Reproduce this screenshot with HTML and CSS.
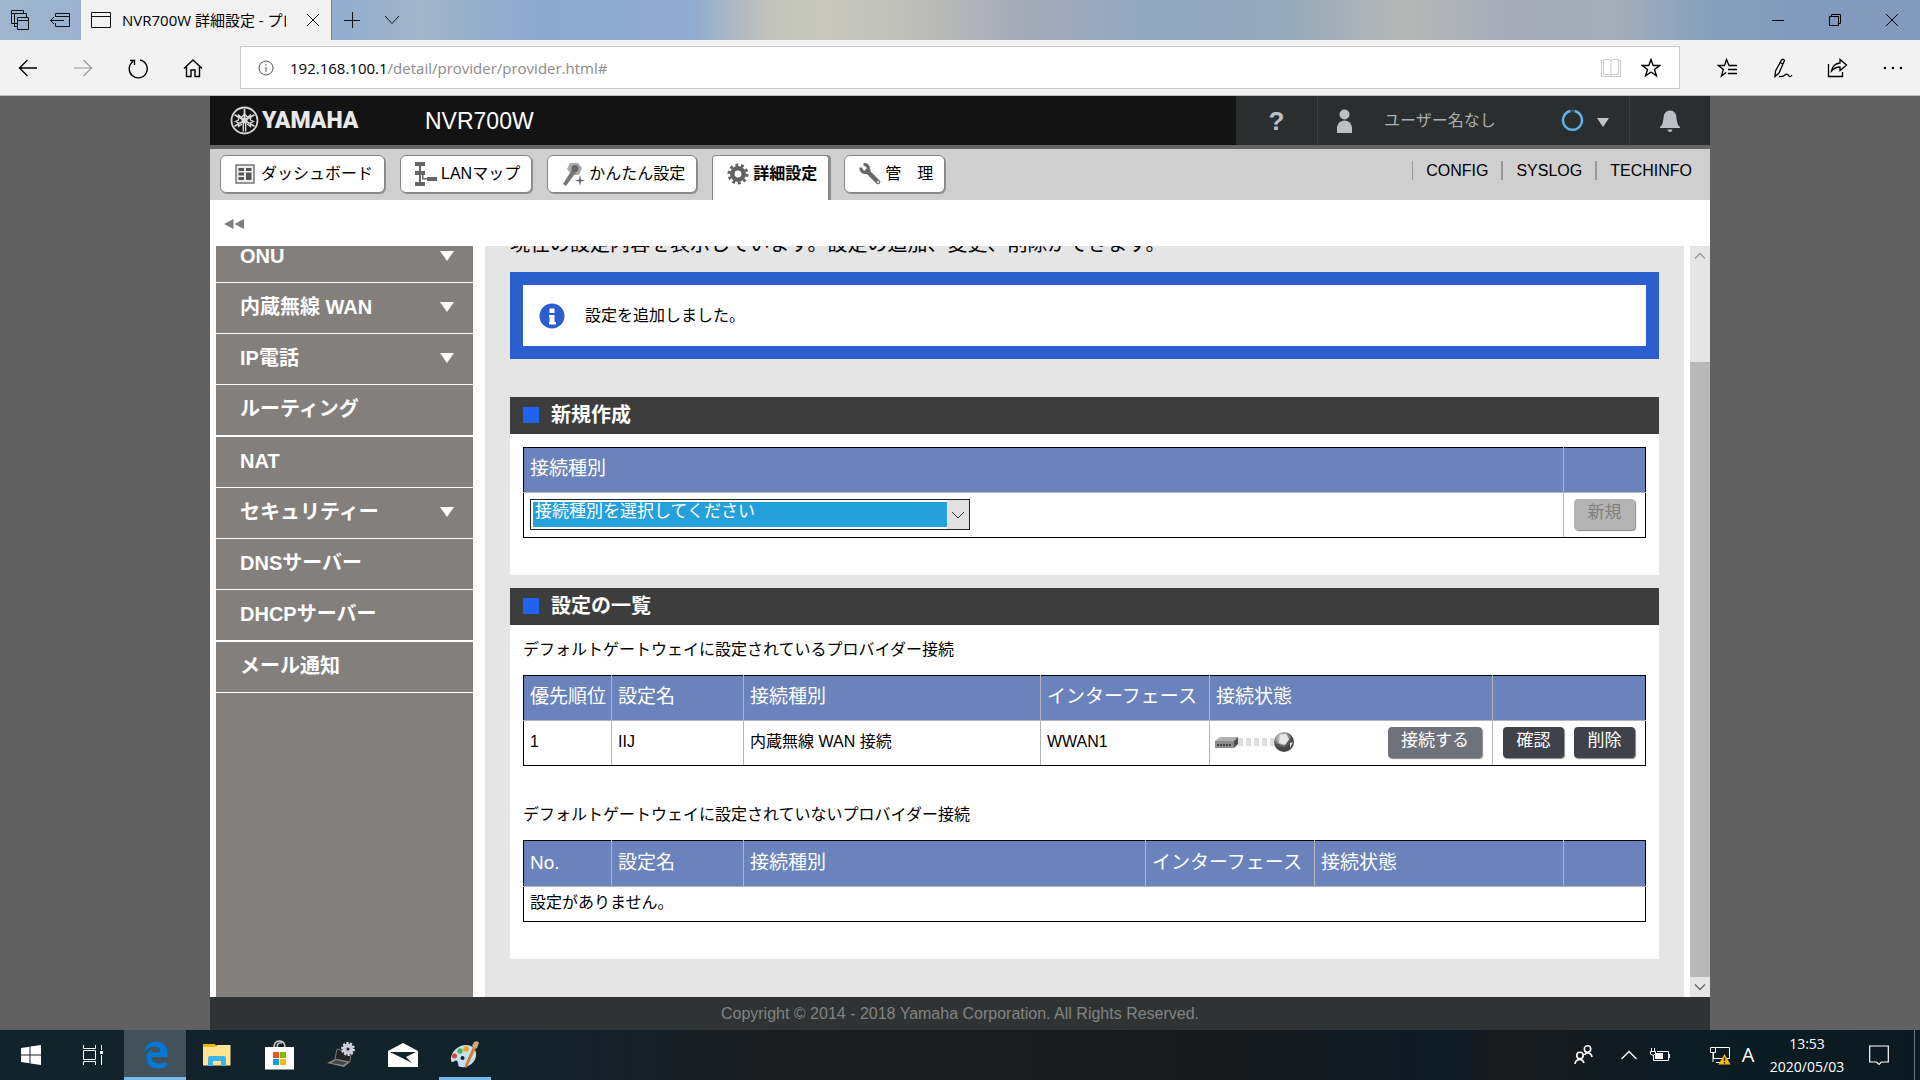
FILE: index.html
```html
<!DOCTYPE html>
<html lang="ja">
<head>
<meta charset="utf-8">
<title>NVR700W 詳細設定 - プロバイダー接続</title>
<link rel="stylesheet" href="styles.css">
</head>
<body>
<div class="titlebar">
  <button class="tb-btn" aria-label="タブ一覧"><svg width="20" height="22" viewBox="0 0 20 22" fill="none" stroke="#111"><path d="M7 14.500H1.500V1.500H13.500V4.500M1.500 4.500H4.500M16.500 8V4.500H4.500V17.500H7"/><path d="M7.500 8.500H18.500V20.500H7.500ZM7.500 11.500H18.500"/></svg></button>
  <button class="tb-btn" aria-label="タブを保存して閉じる"><svg width="22" height="16" viewBox="0 0 22 16" fill="none" stroke="#111"><path d="M6.500 5V1.500H20.500V14.500H6.500V11M6.500 4.500H20.500M1.500 8.500H15M5 5L1.500 8.500L5 12"/></svg></button>
  <div class="btab">
    <svg width="22" height="18" viewBox="0 0 22 18" fill="none" stroke="#111"><path d="M1.500 1.500H20.500V16.500H1.500ZM1.500 5.500H20.500"/></svg>
    <span class="btab-title">NVR700W 詳細設定 - プロバイダー接続</span>
    <button class="btab-close" aria-label="タブを閉じる"><svg width="14" height="14" viewBox="0 0 14 14" stroke="#111"><path d="M1 1L13 13M13 1L1 13"/></svg></button>
  </div>
  <button class="tb-btn" aria-label="新しいタブ"><svg width="18" height="18" viewBox="0 0 18 18" stroke="#111"><path d="M1 9.500H17M9.500 1V17"/></svg></button>
  <button class="tb-btn" aria-label="タブのプレビュー"><svg width="18" height="10" viewBox="0 0 18 10" fill="none" stroke="#111"><path d="M2 1L9 8.500L16 1"/></svg></button>
  <div class="win-btns">
    <button aria-label="最小化"><svg width="12" height="12" viewBox="0 0 12 12" stroke="#000"><path d="M0 6.500H12"/></svg></button>
    <button aria-label="元に戻す"><svg width="12" height="12" viewBox="0 0 12 12" fill="none" stroke="#000"><path d="M.5 2.500H9.500V11.500H.5ZM2.500 2.500V.5H11.500V9.500H9.500"/></svg></button>
    <button aria-label="閉じる"><svg width="14" height="14" viewBox="0 0 14 14" stroke="#000"><path d="M1 1L13 13M13 1L1 13"/></svg></button>
  </div>
</div>
<div class="toolbar">
  <button class="tool" aria-label="戻る"><svg width="20" height="18" viewBox="0 0 20 18" fill="none" stroke="#000" stroke-width="1.300"><path d="M19 9H1.500M9.500 1L1.500 9L9.500 17"/></svg></button>
  <button class="tool" aria-label="進む"><svg width="20" height="18" viewBox="0 0 20 18" fill="none" stroke="#999" stroke-width="1.200"><path d="M1 9H18.500M10.500 1L18.500 9L10.500 17"/></svg></button>
  <button class="tool" aria-label="更新"><svg width="22" height="22" viewBox="0 0 22 22" fill="none" stroke="#000" stroke-width="1.400"><path d="M13 3A9 9 0 1 1 6 4.500M3 3.500H7.500V8"/></svg></button>
  <button class="tool" aria-label="ホーム"><svg width="20" height="20" viewBox="0 0 20 20" fill="none" stroke="#000" stroke-width="1.400"><path d="M1 10.500L10 2L19 10.500M3.500 9V18.500H8V12H12V18.500H16.500V9"/></svg></button>
  <div class="address">
    <svg width="16" height="16" viewBox="0 0 16 16" fill="none" stroke="#555"><circle cx="8" cy="8" r="7"/><path d="M8 7V12M8 4V5.500"/></svg>
    <span class="url"><b>192.168.100.1</b>/detail/provider/provider.html#</span>
    <button class="addr-btn" aria-label="読み取りビュー"><svg width="20" height="20" viewBox="0 0 20 20" fill="none" stroke="#c9c9c9"><path d="M.5 2.500H2.500M.5 2.500V18.500H19.500V2.500H17.500M10 3V17M2.500 16.500V1.500H8.500L10 3L11.500 1.500H17.500V16.500H11.500L10 17.500L8.500 16.500Z"/></svg></button>
    <button class="addr-btn" aria-label="お気に入りに追加"><svg width="20" height="20" viewBox="0 0 20 20" fill="none" stroke="#000" stroke-width="1.400"><path d="M10 1.500L12.200 7.500H18.700L13.500 11.400L15.400 17.800L10 14L4.600 17.800L6.500 11.400L1.300 7.500H7.800Z"/></svg></button>
  </div>
  <button class="tool" aria-label="ハブ"><svg width="21" height="20" viewBox="0 0 21 20" fill="none" stroke="#000" stroke-width="1.300"><path d="M20 7.500H12L9.500 1.500L7.500 7.500H1.300L6.300 11.400L4.400 18L9 14.500M11 11.500H20M11 15.500H20"/></svg></button>
  <button class="tool" aria-label="ノートの追加"><svg width="20" height="20" viewBox="0 0 20 20" fill="none" stroke="#000" stroke-width="1.300"><path d="M2 18.500L2.500 13L8.500 2Q10.500 .3 11.500 2.500L6 15ZM7 4.500L10 6M6 18.500Q10 19 12 17T15.500 17.500T19 17"/></svg></button>
  <button class="tool" aria-label="共有"><svg width="21" height="20" viewBox="0 0 21 20" fill="none" stroke="#000" stroke-width="1.300"><path d="M1.500 6V18.500H15.500V14M4.500 13Q6 5.500 13 5V1.500L19.500 7L13 12.500V9Q8 9 4.500 13Z"/></svg></button>
  <button class="tool" aria-label="その他"><svg width="20" height="4" viewBox="0 0 20 4"><circle cx="2" cy="2" r="1.200"/><circle cx="10" cy="2" r="1.200"/><circle cx="18" cy="2" r="1.200"/></svg></button>
</div>

<div class="page">
<div class="app">
  <header class="head">
    <a class="logo" href="#"><svg width="29" height="29" viewBox="0 0 29 29" fill="none" stroke="#d8d8d8"><circle cx="14.500" cy="14.500" r="13" stroke-width="1.800"/><path d="M14.500 3V14.500M4.500 8.800L24.500 20.200M24.500 8.800L4.500 20.200" stroke-width="1.800"/><path d="M13.300 14V25.500M15.700 14V25.500" stroke-width="1.400"/><path d="M14.500 8L11.500 11.500L8.500 9V14L5.500 15.500L8.500 17V20.500L12 18M14.500 8L17.500 11.500L20.500 9V14L23.500 15.500L20.500 17V20.500L17 18" stroke-width="1.300"/><circle cx="14.500" cy="14.500" r="3" fill="#d8d8d8" stroke="none"/></svg><span>YAMAHA</span></a>
    <span class="model">NVR700W</span>
    <div class="head-tools">
      <button class="h-help" aria-label="ヘルプ">?</button>
      <button class="h-user">
        <svg width="17" height="24" viewBox="0 0 17 24" fill="#bcc0c5"><circle cx="8.500" cy="5.500" r="5"/><path d="M1 24L1 18Q2.500 11.500 8.500 11.500T16 18L16 24Z"/></svg>
        <span>ユーザー名なし</span>
        <svg class="ring" width="23" height="23" viewBox="0 0 23 23" fill="none" stroke="#61b4ec" stroke-width="2.400"><path d="M13.500 2A9.500 9.500 0 1 1 9.500 2"/><path d="M10.500 1.700H12.500" stroke="#49708b" stroke-width="2"/></svg>
        <svg width="12" height="12" viewBox="0 0 12 12" fill="#c2c5c9"><path d="M0 3H12L6 12Z"/></svg>
      </button>
      <button class="h-bell" aria-label="通知"><svg width="20" height="22" viewBox="0 0 20 22" fill="#bcc0c5"><path d="M0 18V17Q3 15 3.500 8Q4 .5 10 .5T16.500 8Q17 15 20 17V18ZM7.500 19.500H12.500Q12 22 10 22T7.500 19.500Z"/></svg></button>
    </div>
  </header>
  <nav class="nav">
    <a class="tab" href="#"><svg width="22" height="20" viewBox="0 0 22 20"><path d="M1 1H19V19H1Z" fill="#eee" stroke="#777" stroke-width="1.500"/><path d="M3.500 4H9V7H3.500ZM11 4H16.500V7H11ZM3.500 8.500H9V11.500H3.500ZM11 8.500H16.500V16H11ZM3.500 13H9V16H3.500Z" fill="#555"/></svg>ダッシュボード</a>
    <a class="tab" href="#"><svg width="22" height="24" viewBox="0 0 22 24" fill="#666"><path d="M0 0H10V4H0ZM0 9H10V13H0ZM0 20H10V24H0ZM12 15H22V19H12ZM4 4H6V20H4ZM7 13H8.500V16H12V17.500H7Z"/></svg>LANマップ</a>
    <a class="tab" href="#"><svg width="23" height="24" viewBox="0 0 23 24"><path d="M8 1H16L20 6L17 13H10L5 7Z" fill="#aaa"/><path d="M11 6L15 9L4 24L1 22Z" fill="#777"/><circle cx="13" cy="6.500" r="3.500" fill="#666"/><path d="M18 13L19 17.500L23 18.500L19 19.500L18 24L17 19.500L13 18.500L17 17.500Z" fill="#666"/></svg>かんたん設定</a>
    <a class="tab active" href="#"><svg width="22" height="22" viewBox="0 0 22 22" fill="none" stroke="#606060"><circle cx="11" cy="11" r="5.700" stroke-width="4.500"/><circle cx="11" cy="11" r="9" stroke-width="3" stroke-dasharray="2.800 2.855"/></svg>詳細設定</a>
    <a class="tab" href="#"><svg width="22" height="22" viewBox="0 0 22 22" fill="none" stroke="#666"><path d="M8 8L19 19" stroke-width="4.500" stroke-linecap="round"/><path d="M1.800 4.500Q2 9.500 6.500 9.500T9.500 5.500Q9 1.500 4.500 1.500" stroke-width="3.200"/><circle cx="19" cy="19" r="1" fill="#fff" stroke="none"/></svg>管　理</a>
    <div class="links"><a href="#">CONFIG</a><a href="#">SYSLOG</a><a href="#">TECHINFO</a></div>
  </nav>
  <div class="crumb"><button aria-label="メニューを閉じる"><svg width="20" height="10" viewBox="0 0 20 10" fill="#817d7b"><path d="M9.500 0V10L0 5ZM20 0V10L10.500 5Z"/></svg></button></div>
  <div class="main">
    <aside class="side">
      <ul>
        <li><a class="sub" href="#">ONU</a></li>
        <li><a class="sub" href="#">内蔵無線 WAN</a></li>
        <li><a class="sub" href="#">IP電話</a></li>
        <li><a href="#">ルーティング</a></li>
        <li><a href="#">NAT</a></li>
        <li><a class="sub" href="#">セキュリティー</a></li>
        <li><a href="#">DNSサーバー</a></li>
        <li><a href="#">DHCPサーバー</a></li>
        <li><a href="#">メール通知</a></li>
      </ul>
    </aside>
    <main class="content">
      <p class="intro">現在の設定内容を表示しています。設定の追加、変更、削除ができます。</p>
      <div class="notice"><svg width="26" height="26" viewBox="0 0 26 26"><circle cx="13" cy="13" r="12.500" fill="#2b5fcd"/><path d="M10.500 5.500H15.500V10H10.500ZM10 12H15.500V19H17V21.500H10V19H10.500V14H10Z" fill="#fff"/></svg>設定を追加しました。</div>
      <section>
        <h2>新規作成</h2>
        <div class="panel">
          <table>
            <colgroup><col><col class="w-s"></colgroup>
            <thead><tr><th><label for="kind">接続種別</label></th><th></th></tr></thead>
            <tbody><tr>
              <td><div class="pick"><select id="kind"><option>接続種別を選択してください</option></select><svg width="14" height="8" viewBox="0 0 14 8" fill="none" stroke="#333"><path d="M1 1L7 7L13 1"/></svg></div></td>
              <td><div class="acts"><button class="btn" disabled>新規</button></div></td>
            </tr></tbody>
          </table>
        </div>
      </section>
      <section>
        <h2>設定の一覧</h2>
        <div class="panel">
          <p>デフォルトゲートウェイに設定されているプロバイダー接続</p>
          <table>
            <colgroup><col class="w-no"><col class="w-name"><col><col class="w-if"><col class="w-state"><col class="w-act"></colgroup>
            <thead><tr><th>優先順位</th><th>設定名</th><th>接続種別</th><th>インターフェース</th><th>接続状態</th><th></th></tr></thead>
            <tbody><tr>
              <td>1</td><td>IIJ</td><td>内蔵無線 WAN 接続</td><td>WWAN1</td>
              <td><div class="state">
                <svg width="80" height="22" viewBox="0 0 80 22"><defs><radialGradient id="g" cx=".4" cy=".3"><stop offset="0" stop-color="#eee"/><stop offset=".6" stop-color="#999"/><stop offset="1" stop-color="#444"/></radialGradient></defs><path d="M0 10L5 6H23L19 10Z" fill="#b0b0b0"/><path d="M0 10H19V17H0Z" fill="#8c8c8c"/><path d="M19 10L23 6V13L19 17Z" fill="#4c4c4c"/><path d="M2 14H17" stroke="#444" stroke-width="2" stroke-dasharray="2 1"/><path d="M23 11H59" stroke="#dcdcdc" stroke-width="8" stroke-dasharray="5 3"/><circle cx="69" cy="11" r="10" fill="url(#g)"/><path d="M65 4L71 3L74 8L70 14L64 12ZM75 12L78 11L75 17Z" fill="#e8e8e8"/><path d="M60 13Q67 13 68 20M71 14L77 7" stroke="#444" fill="none"/></svg>
                <button class="btn connect">接続する</button></div></td>
              <td><div class="acts"><button class="btn">確認</button><button class="btn">削除</button></div></td>
            </tr></tbody>
          </table>
          <p>デフォルトゲートウェイに設定されていないプロバイダー接続</p>
          <table class="empty">
            <colgroup><col class="w-no"><col class="w-name"><col><col class="w-if"><col class="w-stat"><col class="w-s"></colgroup>
            <thead><tr><th>No.</th><th>設定名</th><th>接続種別</th><th>インターフェース</th><th>接続状態</th><th></th></tr></thead>
            <tbody><tr><td colspan="6">設定がありません。</td></tr></tbody>
          </table>
        </div>
      </section>
    </main>
    <div class="scroll"><svg width="20" height="20" viewBox="0 0 20 20" fill="none" stroke="#999" stroke-width="1.300"><path d="M5 12.500L10 7.500L15 12.500"/></svg><div class="thumb"></div><svg width="20" height="20" viewBox="0 0 20 20" fill="none" stroke="#666" stroke-width="1.300"><path d="M5 7.500L10 12.500L15 7.500"/></svg></div>
  </div>
  <footer>Copyright © 2014 - 2018 Yamaha Corporation. All Rights Reserved.</footer>
</div>
</div>

<div class="taskbar">
  <button class="task" aria-label="スタート"><svg width="20" height="20" viewBox="0 0 20 20" fill="#fff"><path d="M0 3L8.500 1.800V9.500H0ZM9.500 1.600L20 0V9.500H9.500ZM0 10.500H8.500V18.200L0 17ZM9.500 10.500H20V20L9.500 18.400Z"/></svg></button>
  <button class="task" aria-label="タスクビュー"><svg width="22" height="20" viewBox="0 0 22 20" fill="none" stroke="#fff"><path d="M1.500 0V3.500H13.500V0M1.500 5.500H13.500V14.500H1.500ZM1.500 20V16.500H13.500V20M19.500 0V5M19.500 10V20"/><path d="M18 6H21V9H18Z" fill="#fff" stroke="none"/></svg></button>
  <button class="task current running" aria-label="Microsoft Edge"><svg width="25" height="28" viewBox="0 0 25 28" fill="#0078d7"><path d="M.5 12.500C2 4.500 7 .5 13 .5C20.500 .5 24.500 6 24.500 12.500V16H8.500C8.500 20.500 12 22.500 16 22.500C19 22.500 21.500 21.500 23.500 20.500V25.500C21 27 18 27.500 15 27.500C8 27.500 3.500 23.500 3.500 17.500C3.500 13.500 5.500 10 9.500 8C8.700 9 8.300 10 8.300 11.500H17.300C17.300 8 15.500 5.500 11.500 5.500C7 5.500 2.500 8.500 .5 12.500Z"/></svg></button>
  <button class="task" aria-label="エクスプローラー"><svg width="28" height="24" viewBox="0 0 28 24"><path d="M0 1H12L14 4H0Z" fill="#f0b400"/><path d="M0 4H12L14 2H27.500V22.500H0Z" fill="#ffe694"/><path d="M5 23V15Q5 13 7 13H21Q23 13 23 15V23H18V18H10V23Z" fill="#3fb4e6"/></svg></button>
  <button class="task" aria-label="Microsoft Store"><svg width="29" height="30" viewBox="0 0 29 30"><path d="M9 8Q9 1 14.500 1T20 8M12 8Q12 2 17 3" fill="none" stroke="#ccc" stroke-width="1.500"/><path d="M0 7H29V29.500H0Z" fill="#fff"/><path d="M8 12H14V18H8Z" fill="#f25022"/><path d="M15 12H21V18H15Z" fill="#7fba00"/><path d="M8 19H14V25H8Z" fill="#00a4ef"/><path d="M15 19H21V25H15Z" fill="#ffb900"/></svg></button>
  <button class="task" aria-label="デバイス設定"><svg width="28" height="26" viewBox="0 0 28 26"><path d="M10 7L24 11L23 20L8 17Z" fill="#222" stroke="#777"/><path d="M0 21L8 17L23 20L17 25Z" fill="#888"/><path d="M4 21L9 18L20 20.500L16 23Z" fill="#444"/><circle cx="21" cy="7" r="3.500" fill="none" stroke="#c9ccd4" stroke-width="4"/><circle cx="21" cy="7" r="6" fill="none" stroke="#d9dce4" stroke-width="2" stroke-dasharray="2.200 1.500"/></svg></button>
  <button class="task" aria-label="メール"><svg width="30" height="24" viewBox="0 0 30 24"><path d="M0 8L15 0L30 8V24H0Z" fill="#fff"/><path d="M2 9H28L18 14L24 20L14 15Z" fill="#12222b"/></svg></button>
  <button class="task running paint" aria-label="ペイント"><svg width="30" height="28" viewBox="0 0 30 28"><path d="M1 20C0 11 8 4 16 4C23 4 27 9 26 15C25 22 18 27 11 26C7 26 9 22 7 20C5 18 3 23 1 20Z" fill="#c3dff1"/><circle cx="4.500" cy="15" r="2.500" fill="#d8433b"/><circle cx="10" cy="10" r="2.700" fill="#4db24b"/><circle cx="16" cy="8" r="2.800" fill="#f5a31a"/><circle cx="12.500" cy="17" r="2" fill="#12222b"/><path d="M23 6L26 7L17 26L15 27L15 24Z" fill="#d97a28"/><path d="M22 5L24 1L27 0L29 2L27 7L25 8Z" fill="#c9a97c"/></svg></button>
  <div class="tray">
    <button class="t-people" aria-label="People"><svg width="20" height="20" viewBox="0 0 20 20" fill="none" stroke="#fff" stroke-width="1.600"><circle cx="13.500" cy="4" r="3.200"/><circle cx="6" cy="10.500" r="3.200"/><path d="M10.500 10L12 8H14.500Q17.500 8.500 18 12M1 19Q1.500 14.500 6 14.500Q9 14.500 10 18"/></svg></button>
    <button class="t-more" aria-label="隠れているインジケーター"><svg width="18" height="10" viewBox="0 0 18 10" fill="none" stroke="#fff" stroke-width="1.300"><path d="M1.500 9L9 1.500L16.500 9"/></svg></button>
    <button class="t-icon" aria-label="バッテリー"><svg width="21" height="14" viewBox="0 0 21 14" fill="none" stroke="#fff"><path d="M7 3.500H18.500V12.500H3.500V7M19.500 6V10M1.500 0V3M4.500 0V3M.5 3.500H5.500V6L3 7.500L.5 6Z"/><path d="M5 5H13V11H5Z" fill="#fff" stroke="none"/></svg></button>
    <button class="t-icon t-net" aria-label="ネットワーク"><svg width="21" height="19" viewBox="0 0 21 19" fill="none" stroke="#fff"><path d="M6 1.500H19.500V12.500H3.500V7M6 16.500H12M.5 1.500H5.500V6.500H.5ZM3 6.500V16"/><path d="M14.500 8L20.500 18.500H8.500Z" fill="#fdb813" stroke="none"/><path d="M14.500 11.500V15M14.500 16V17.500" stroke="#222" stroke-width="1.400"/></svg></button>
    <button class="t-ime">A</button>
    <button class="t-clock"><span>13:53</span><span>2020/05/03</span></button>
    <button class="t-note" aria-label="通知"><svg width="20" height="21" viewBox="0 0 20 21" fill="none" stroke="#fff" stroke-width="1.200"><path d="M.7 1H19.300V17H12.500L10 19.500L7.500 17H.7Z"/></svg></button>
    <button class="t-desk" aria-label="デスクトップの表示"></button>
  </div>
</div>
</body>
</html>
```
FILE: styles.css
```css
* { box-sizing: border-box; }
body {
  margin: 0;
  min-height: 100vh;
  display: flex;
  flex-direction: column;
  font: 16px/24px "Liberation Sans", "Noto Sans CJK JP", sans-serif;
  color: #000;
  background: #616161;
}
button { font: inherit; color: inherit; padding: 0; border: 0; background: none; display: flex; align-items: center; justify-content: center; }
a { color: inherit; text-decoration: none; }
svg { display: block; flex: none; }
ul, p, h2 { margin: 0; padding: 0; }
ul { list-style: none; }

/* browser title bar */
.titlebar {
  display: flex;
  height: 40px;
  font: 15px/24px "Open Sans", "Noto Sans CJK JP", sans-serif;
  background: linear-gradient(90deg, #9fb5cf 0%, #8fadd0 17%, #a2b4c8 22%, #8ba9cf 28%, #90accf 36%, #c2c3bc 40%, #c8c8bd 43%, #bcbdb8 48%, #a6abb8 53%, #92a8c0 60%, #95a9bb 67%, #b5b8b6 73%, #a5abb8 79%, #a5aeb9 84%, #86a0bd 89%, #809abc 94%, #8299bc 100%);
}
.tb-btn { width: 40px; }
.btab { display: flex; align-items: center; width: 251px; margin-left: 1px; padding: 0 6px 0 9px; background: #f2f2f2; border: solid #6f8094; border-width: 0 1px 0 0; }
.btab-title { width: 164px; margin-left: 10px; overflow: hidden; white-space: nowrap; }
.btab-close { width: 24px; height: 24px; margin-left: auto; }
.win-btns { display: flex; margin-left: auto; }
.win-btns button { width: 57px; }

/* browser toolbar */
.toolbar { display: flex; align-items: center; height: 56px; background: #f2f2f2; border-bottom: 1px solid #bcbcbc; }
.tool { width: 55px; height: 44px; }
.address { flex: 1; display: flex; align-items: center; height: 43px; margin: 0 20px; padding: 0 8px 0 17px; background: #fff; border: 1px solid #c8c8c8; font: 15px/24px "Open Sans", sans-serif; }
.url { flex: 1; margin-left: 16px; color: #8c8c8c; }
.url b { font-weight: 400; color: #000; }
.addr-btn { width: 40px; height: 40px; }

/* application frame */
.page { flex: 1; display: flex; padding: 0 210px; }
.app { flex: 1; display: flex; flex-direction: column; min-width: 0; background: #fff; }
.head { display: flex; align-items: center; height: 53px; background: #131313; border-bottom: 4px solid #656565; color: #fff; }
.logo { display: flex; align-items: center; gap: 3px; margin-left: 20px; width: 195px; color: #e8e8e8; font: 900 23px/30px Roboto, "Liberation Sans", sans-serif; }
.model { font-size: 23px; }
.head-tools { display: flex; align-self: stretch; margin-left: auto; background: #2a2e2f; color: #adb0b3; }
.h-help { width: 81px; font-size: 26px; font-weight: bold; color: #bcc0c5; }
.h-user { width: 313px; padding: 0 20px 0 18px; border: solid #3b4041; border-width: 0 1px; justify-content: flex-start; }
.h-user span { margin-left: 31px; }
.h-user .ring { margin: 0 13px 0 auto; }
.h-bell { width: 80px; }

.nav { display: flex; align-items: flex-start; gap: 15px; height: 51px; padding: 6px 18px 0 10px; background: #cfcfcf; }
.tab { display: flex; align-items: center; gap: 4px; height: 38px; padding: 0 11px 0 14px; background: #fff; border: 1px solid #868686; border-radius: 6px; box-shadow: 1px 1px 0 #8f8f8f; white-space: nowrap; }
.tab.active { height: 45px; padding-bottom: 8px; font-weight: bold; border-bottom: 0; border-radius: 4px 4px 0 0; box-shadow: 2px 0 0 #8f8f8f; }
.links { display: flex; align-items: center; gap: 13px; margin: 6px 0 0 auto; line-height: 19px; }
.links a { padding-left: 13px; border-left: 2px solid #999; }
.links a:first-child { border-left-width: 1px; }

.crumb { display: flex; align-items: center; height: 46px; padding: 2px 0 0 14px; }
.main { flex: 1; display: flex; padding-left: 6px; min-height: 0; }
.side { width: 257px; background: #837f7d; color: #fff; font-weight: bold; font-size: 20px; overflow: hidden; }
.side ul { margin-top: -14px; }
.side li { border-bottom: 1px solid #fff; }
.side li:nth-child(4n) { border-bottom-width: 2px; }
.side a { display: flex; align-items: center; justify-content: space-between; height: 50px; padding: 0 19px 2px 24px; }
.side .sub::after { content: ""; border: solid transparent; border-width: 10px 7px 0; border-top-color: #fff; }

.content { flex: 1; min-width: 0; margin: 0 6px 0 12px; padding: 0 25px 38px; background: #e5e5e5; overflow: hidden; }
.intro { margin: -17px 0 13px; font-size: 20px; line-height: 30px; }
.notice { display: flex; align-items: center; gap: 20px; height: 87px; padding-left: 16px; margin-bottom: 38px; background: #fff; border: 13px solid #2b5fcd; }
section { background: #fff; margin-bottom: 13px; }
section:last-child { margin-bottom: 0; }
h2 { display: flex; align-items: center; gap: 12px; height: 37px; padding: 0 13px 2px; background: #3d3d3d; color: #fff; font-size: 20px; }
h2::before { content: ""; width: 16px; height: 16px; background: #2163f1; }
.panel { padding: 13px 13px 37px; }
.panel p { margin-bottom: 13px; }
table + p { margin-top: 37px; }

table { width: 100%; table-layout: fixed; border-collapse: collapse; border: 1px solid #000; }
th, td { height: 45px; padding: 0 6px 2px; border: 1px solid #b5b5b8; text-align: left; vertical-align: middle; white-space: nowrap; }
th { background: #6a83bc; color: #fff; font-size: 19px; font-weight: 400; }
tr > :first-child { border-left-color: #000; }
tr > :last-child { border-right-color: #000; }
thead th { border-top-color: #000; }
tbody td { border-bottom-color: #000; }
.empty th { height: 46px; }
.empty td { height: 35px; }
.w-no { width: 88px; }
.w-name { width: 132px; }
.w-if { width: 169px; }
.w-state { width: 283px; }
.w-stat { width: 249px; }
.w-act { width: 153px; }
.w-s { width: 82px; }

.pick { position: relative; width: 440px; height: 31px; }
.pick select { appearance: none; width: 100%; height: 31px; padding: 0 26px 5px 4px; border: 1px solid #222; outline: 0; border-radius: 0; color: #fff; font: 17px/24px "Liberation Sans", "Noto Sans CJK JP", sans-serif; background: linear-gradient(90deg, #26a0da, #26a0da) 2px 2px / 414px 25px no-repeat, linear-gradient(#e1e1e1, #e1e1e1) right / 22px 100% no-repeat, #fff; }
.pick svg { position: absolute; right: 5px; top: 12px; pointer-events: none; }
.state { display: flex; align-items: center; justify-content: space-between; padding-right: 4px; margin-left: -1px; }
.acts { display: flex; justify-content: flex-end; gap: 10px; padding-right: 4px; }
.btn { height: 31px; min-width: 61px; padding: 0 13px 2px; border-radius: 4px; background: #40424a; color: #fff; font-size: 17px; box-shadow: 1px 1px 1px #888; }
.btn.connect { background: #6e727b; }
.btn:disabled { background: #b4b4b4; color: #808080; }

.scroll { display: flex; flex-direction: column; width: 20px; background: #e5e5e5; }
.thumb { flex: 1; margin-top: 96px; background: #b9b9b9; }
footer { height: 33px; line-height: 33px; text-align: center; color: #828484; background: #303333; }

/* Windows taskbar */
.taskbar { display: flex; height: 50px; color: #fff; font-family: "Open Sans", sans-serif; background: linear-gradient(90deg, #12232c 0%, #12222b 27%, #1b1d1f 42%, #18191b 62%, #0c1b24 76%, #191a1c 78%, #0b1c24 88%, #0b1a20 100%); }
.task { width: 62px; }
.task.current { background: #42515a; }
.task.running { border: solid transparent; border-width: 3px 0; border-bottom-color: #76b9ed; }
.task.paint { width: 52px; margin-left: 5px; }
.tray { display: flex; margin-left: auto; }
.t-people { width: 38px; margin-right: 10px; }
.t-more { width: 32px; }
.t-icon { width: 30px; }
.t-net { margin-left: 30px; }
.t-ime { width: 26px; font-size: 20px; }
.t-clock { width: 92px; flex-direction: column; font-size: 14px; line-height: 23px; }
.t-note { width: 52px; }
.t-desk { width: 6px; margin-left: 9px; border-left: 1px solid #6b7478; }
```
